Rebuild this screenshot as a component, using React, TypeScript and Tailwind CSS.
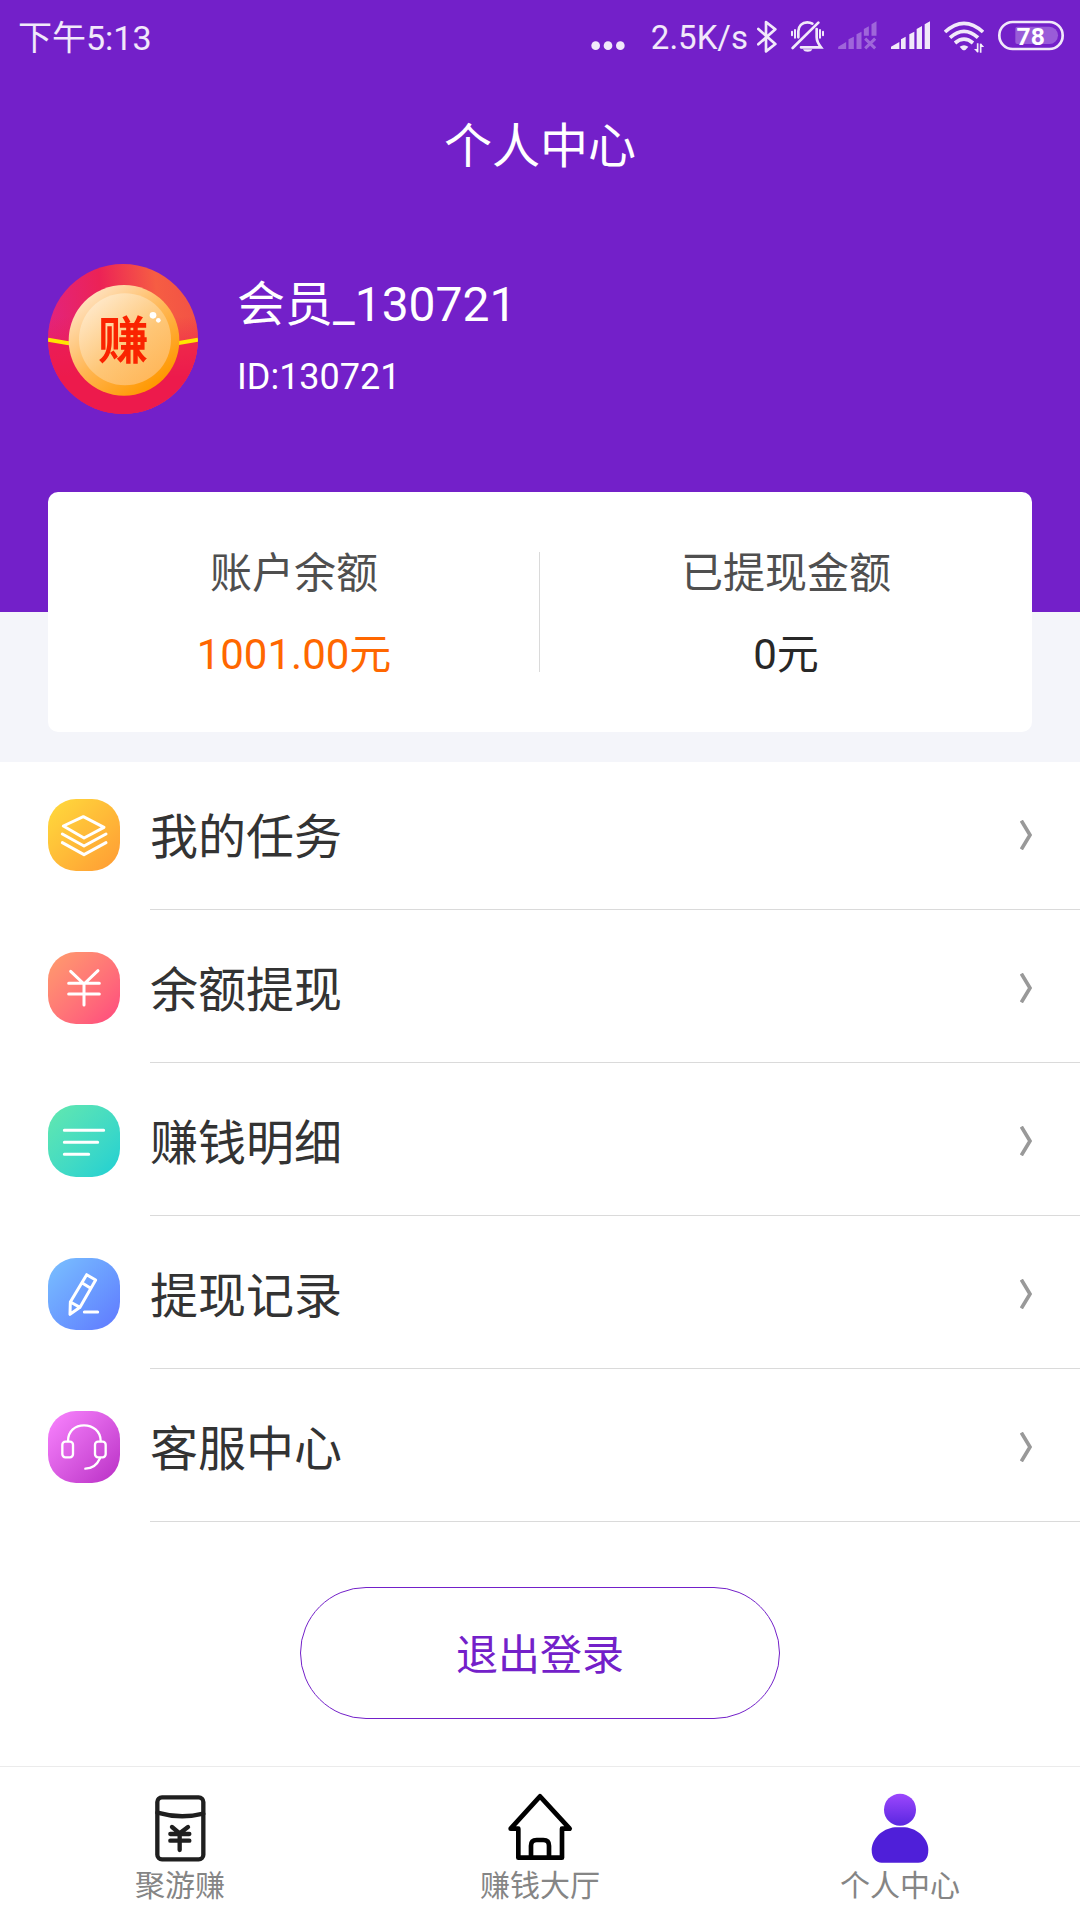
import type { ReactNode } from 'react';

function SignalBars() {
  return (
    <svg className="h-10 w-[39px]" viewBox="960 48 117 120" fill="currentColor" aria-hidden="true">
      <path d="M960 147v-7l25-14v21zM990 147v-29l14-8v37zM1015 147v-44l15-8v52zM1037 147v-60l16-9v69zM1061 147v-74l16-9v83z" />
    </svg>
  );
}

function StatusBar() {
  return (
    <div className="flex h-[72px] items-center justify-between pr-4 pl-[18px] leading-[40px] text-white/90">
      <time className="pt-1 text-[34px] whitespace-nowrap">下午5:13</time>
      <div className="flex items-center">
        <svg className="mr-[26px] h-10 w-[34px]" viewBox="61 48 102 120" fill="currentColor" aria-hidden="true">
          <circle cx="75" cy="137" r="13" />
          <circle cx="112" cy="137" r="13" />
          <circle cx="149" cy="137" r="13" />
        </svg>
        <span className="mr-[9px] pt-1 text-[33px]">2.5K/s</span>
        <div className="flex items-center gap-[14px]">
          <svg className="h-10 w-5" viewBox="558 48 60 120" fill="none" stroke="currentColor" strokeWidth="8" strokeLinecap="round" strokeLinejoin="round" aria-hidden="true">
            <path d="M562 87l51 45-28 22V66l28 22-51 45" />
          </svg>
          <svg className="h-10 w-[33px]" viewBox="661 48 99 120" fill="none" stroke="currentColor" strokeWidth="8" strokeLinecap="round" aria-hidden="true">
            <path d="M666 144l77-76M683 112V94c0-16 11-27 27-27 6 0 10 1 15 4M738 87v25c0 10 5 20 13 30h-60" />
            <path d="M697 148h28c-3 10-25 10-28 0z" fill="currentColor" stroke="none" />
            <path d="M664 95v11M673 90v23M748 90v23M757 95v11" strokeWidth="6" />
          </svg>
          <svg className="h-10 w-[39px] opacity-35" viewBox="802 48 116 120" fill="currentColor" aria-hidden="true">
            <path d="M802 147v-7l24-14v21zM833 147v-29l16-8v37zM857 147v-44l15-8v52zM879 107V87l15-8v28zM902 107V73l15-9v43z" />
            <path d="M883 116l30 29M913 116l-30 29" stroke="currentColor" strokeWidth="9" />
          </svg>
          <SignalBars />
          <svg className="h-10 w-10" viewBox="1121 48 120 120" fill="none" stroke="currentColor" strokeWidth="11" aria-hidden="true">
            <path d="M1124 96q57-52 114 0M1139 113q42-38 84 0M1154 129q27-23 54 0" />
            <path d="M1168 140q13-9 26 0l-8 9q-5 3-10 0z" fill="currentColor" stroke="none" />
            <path d="M1222 130v27M1231 158v-27" strokeWidth="5" />
            <path d="M1211 147h11v11zM1242 141h-11v-11z" fill="currentColor" stroke="none" />
          </svg>
          <svg className="h-10 w-[66px]" viewBox="1284 48 198 120" role="img" aria-label="78%">
            <rect x="1288" y="66" width="190" height="81" rx="40" fill="none" stroke="currentColor" strokeWidth="8" />
            <path d="M1342 80h96a26 26 0 0 1 0 52h-96q-6 0-6-6V86q0-6 6-6z" fill="currentColor" opacity="0.3" />
            <text x="1382" y="134" textAnchor="middle" fontSize="74" fontWeight="700" fill="white">78</text>
          </svg>
        </div>
      </div>
    </div>
  );
}

function Avatar() {
  return (
    <svg className="size-[150px] shrink-0 rounded-full" viewBox="0 0 450 450" role="img" aria-label="头像">
      <defs>
        <linearGradient id="flap" x1="0" y1="0.5" x2="1" y2="0.4">
          <stop offset="0" stopColor="#e2247e" />
          <stop offset="0.38" stopColor="#ec2256" />
          <stop offset="0.75" stopColor="#f65d43" />
          <stop offset="1" stopColor="#f25245" />
        </linearGradient>
        <linearGradient id="fade" x1="0" y1="0" x2="0" y2="1">
          <stop offset="0.35" stopColor="#ed1b4d" stopOpacity="0" />
          <stop offset="0.75" stopColor="#ed1b4d" />
        </linearGradient>
        <linearGradient id="rim" x1="0.15" y1="0.1" x2="0.8" y2="0.9">
          <stop offset="0" stopColor="#ffe2c0" />
          <stop offset="0.5" stopColor="#ffb755" />
          <stop offset="1" stopColor="#ff9800" />
        </linearGradient>
        <linearGradient id="coin" x1="0.15" y1="0.1" x2="0.8" y2="0.9">
          <stop offset="0" stopColor="#ffe8c8" />
          <stop offset="0.6" stopColor="#fec676" />
          <stop offset="1" stopColor="#ffb85c" />
        </linearGradient>
      </defs>
      <rect width="450" height="450" fill="url(#flap)" />
      <rect width="450" height="450" fill="url(#fade)" />
      <path d="M0 227q112 22 225 22t225-22v223H0z" fill="#ed1b4d" opacity="0.6" />
      <path d="M0 227q112 22 225 22t225-22" fill="none" stroke="#ffe600" strokeWidth="12" />
      <circle cx="228" cy="229" r="166" fill="url(#rim)" />
      <circle cx="231" cy="226" r="138" fill="url(#coin)" />
      <text x="226" y="284" textAnchor="middle" fontSize="152" fontWeight="700" fill="#fa2300">赚</text>
      <circle cx="315" cy="154" r="10" fill="white" />
      <circle cx="331" cy="169" r="7" fill="white" />
    </svg>
  );
}

function Amount({ label, value, tone }: { label: string; value: string; tone: string }) {
  return (
    <div className="flex flex-1 flex-col items-center gap-[21px] pt-[5px] text-[42px] leading-[60px]">
      <dt className="text-[#4f4f4f]">{label}</dt>
      <dd className={tone}>{value}</dd>
    </div>
  );
}

type Item = { label: string; tile: string; icon: ReactNode };

const items: Item[] = [
  {
    label: '我的任务',
    tile: 'from-[#ffdb3c] to-[#ff9a34]',
    icon: <path d="M46 81l60-28 62 32-60 32zM43 105l65 36 66-36M43 131l65 36 66-36" />,
  },
  {
    label: '余额提现',
    tile: 'from-[#ff9d6c] to-[#ff467e]',
    icon: <path d="M68 58l40 38 42-40M62 94h92M62 126h92M108 96v63" />,
  },
  {
    label: '赚钱明细',
    tile: 'from-[#62e8ae] to-[#1ccfd3]',
    icon: <path d="M49 76h118M49 112h100M49 148h73" />,
  },
  {
    label: '提现记录',
    tile: 'from-[#7ac0ff] to-[#6078ff]',
    icon: <path d="M116 50l27 16-47 82-30 21 1-37zM104 76l24 15M67 132l29 16M109 162h40" />,
  },
  {
    label: '客服中心',
    tile: 'from-[#fa84ff] to-[#b92cc5]',
    icon: (
      <g strokeWidth="7">
        <path d="M60 90C60 60 82 43 108 43s50 17 50 47M156 142c-8 18-24 31-44 31" />
        <rect x="43" y="92" width="32" height="47" rx="9" />
        <rect x="141" y="92" width="32" height="47" rx="9" />
      </g>
    ),
  },
];

function MenuRow({ label, tile, icon }: Item) {
  return (
    <li>
      <button type="button" className="flex w-full items-stretch pl-12 text-left">
        <span className="flex w-[102px] shrink-0 items-center pb-[2px]">
          <span className={`block size-[72px] rounded-[28px] bg-linear-135 ${tile}`}>
            <svg className="size-full" viewBox="0 0 216 216" fill="none" stroke="white" strokeWidth="9" strokeLinecap="round" strokeLinejoin="round" aria-hidden="true">
              {icon}
            </svg>
          </span>
        </span>
        <span className="flex h-[148px] flex-1 items-center justify-between border-b border-[#dadada] pr-12 text-[48px] leading-[72px] text-[#333]">
          <span className="pt-[5px]">{label}</span>
          <svg className="mb-[2px] h-[30px] w-3" viewBox="0 0 36 90" fill="none" stroke="#999" strokeWidth="11" aria-hidden="true">
            <path d="M4 2l26 43L4 88" />
          </svg>
        </span>
      </button>
    </li>
  );
}

const tabs = [
  {
    label: '聚游赚',
    active: false,
    icon: (
      <svg className="size-[74px]" viewBox="129 120 222 222" fill="none" stroke="#1f1f1f" strokeWidth="13" strokeLinecap="round" aria-hidden="true">
        <rect x="172" y="142" width="138" height="186" rx="14" />
        <path d="M172 188q69 20 138 3" />
        <path d="M216 231l23 19 25-19M211 252h57M211 272h57M239 252v48" />
      </svg>
    ),
  },
  {
    label: '赚钱大厅',
    active: false,
    icon: (
      <svg className="size-[74px]" viewBox="1209 120 222 222" fill="none" stroke="#000" strokeWidth="14" strokeLinejoin="round" aria-hidden="true">
        <path d="M1255 323v-87h-23l88-97 89 97h-23v87z" />
        <path d="M1293 323v-36q0-17 17-17h20q17 0 17 17v36" />
      </svg>
    ),
  },
  {
    label: '个人中心',
    active: true,
    icon: (
      <svg className="size-[74px]" viewBox="249 120 222 222" aria-hidden="true">
        <defs>
          <linearGradient id="head" x1="0" y1="0" x2="0" y2="1">
            <stop offset="0" stopColor="#9c47fd" />
            <stop offset="1" stopColor="#5a27e0" />
          </linearGradient>
        </defs>
        <circle cx="360" cy="179" r="48" fill="url(#head)" />
        <path d="M345 232h30c40 4 70 36 70 68 0 26-12 38-30 38H305c-18 0-30-14-30-38 0-32 30-64 70-68z" fill="#4f1fd9" />
      </svg>
    ),
  },
];

export default function App() {
  return (
    <div className="flex min-h-screen flex-col bg-white font-['Roboto','Noto_Sans_CJK_SC',sans-serif]">
      <header className="bg-[#7320c9] pb-[198px] text-white">
        <StatusBar />
        <h1 className="pt-[2px] text-center text-[48px] leading-[146px]">个人中心</h1>
        <div className="flex items-center gap-[39px] px-12 pt-11">
          <Avatar />
          <div className="pt-1">
            <p className="text-[48px] leading-[72px]">会员_130721</p>
            <p className="text-[36px] leading-[72px]">ID:130721</p>
          </div>
        </div>
      </header>

      <main className="flex flex-1 flex-col">
        <section className="bg-[#f4f5fa] px-12 pb-[30px]">
          <dl className="-mt-[120px] flex h-60 items-center rounded-[10px] bg-white">
            <Amount label="账户余额" value="1001.00元" tone="text-[#ff6700]" />
            <div className="-ml-px h-[120px] w-px bg-[#dadada]" />
            <Amount label="已提现金额" value="0元" tone="text-[#282828]" />
          </dl>
        </section>

        <ul className="flex flex-col gap-[5px]">
          {items.map((item) => (
            <MenuRow key={item.label} {...item} />
          ))}
        </ul>

        <button
          type="button"
          className="mx-auto mt-[65px] mb-[46px] h-[132px] w-[480px] rounded-full border border-[#7320c9] pt-1 text-[42px] text-[#7320c9]"
        >
          退出登录
        </button>
      </main>

      <nav className="flex border-t border-[#ebebeb] pt-[23px] pb-[12px]">
        {tabs.map((tab) => (
          <a
            key={tab.label}
            href="#"
            aria-current={tab.active ? 'page' : undefined}
            className="flex flex-1 flex-col items-center text-[30px] leading-[44px] text-[#858585]"
          >
            {tab.icon}
            {tab.label}
          </a>
        ))}
      </nav>
    </div>
  );
}
